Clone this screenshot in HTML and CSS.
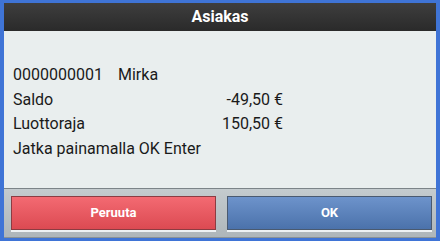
FILE: index.html
```html
<!DOCTYPE html>
<html lang="fi">
<head>
    <meta charset="UTF-8">
    <title>Asiakas</title>
    <link rel="stylesheet" href="styles.css">
</head>
<body>
    <div class="dialog">
        <div class="title">Asiakas</div>
        <div class="content">
            <div class="row"><span class="id">0000000001</span><span>Mirka</span></div>
            <div class="row"><span class="label">Saldo</span><span class="value">-49,50 €</span></div>
            <div class="row"><span class="label">Luottoraja</span><span class="value">150,50 €</span></div>
            <div class="row">Jatka painamalla OK Enter</div>
        </div>
        <div class="buttons">
            <div class="btn cancel">Peruuta</div>
            <div class="btn ok">OK</div>
        </div>
    </div>
</body>
</html>
```

FILE: styles.css
```css
*{
    margin: 0;
    padding: 0;
    box-sizing: border-box;
}
body{
    width: 440px;
    height: 241px;
    background: #3f74d6;
    padding: 3px 4px 3px 4px;
    font-family: Roboto, "Liberation Sans", sans-serif;
    overflow: hidden;
}
.dialog{
    height: 235px;
    display: flex;
    flex-direction: column;
}
.title{
    height: 28px;
    background: linear-gradient(#3e3e3e, #2a2a2a);
    color: #ffffff;
    font-weight: bold;
    font-size: 16px;
    line-height: 28px;
    text-align: center;
}
.content{
    height: 158px;
    background: #e9eeee;
    border-bottom: 1px solid #7c8488;
    padding: 32px 0 0 9px;
    color: #1a1a1a;
    font-size: 16px;
}
.row{
    height: 24.5px;
    line-height: 24px;
    display: flex;
}
.id{
    width: 105px;
}
.label{
    width: 208px;
}
.value{
    width: 62px;
    text-align: right;
}
.buttons{
    flex: 1;
    background: linear-gradient(#c4cbce, #aeb6ba);
    display: flex;
    gap: 11px;
    padding: 7px 4px 7px 7px;
    border-bottom: 1px solid #8a9296;
}
.btn{
    flex: 1;
    height: 34px;
    color: #ffffff;
    font-weight: bold;
    font-size: 13px;
    line-height: 32px;
    text-align: center;
    border: 1px solid #6a6e72;
    box-shadow: 0 2px 0 #eef2f4;
}
.cancel{
    background: linear-gradient(#f36a72, #dc4a52);
    border-color: #8c3c42;
}
.ok{
    background: linear-gradient(#6d93cb, #4b72ab);
    border-color: #4a5a70;
}
```
